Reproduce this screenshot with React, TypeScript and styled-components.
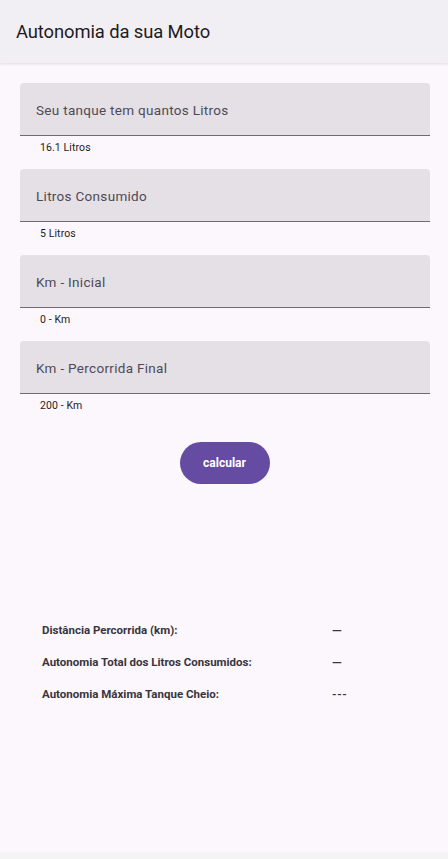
import React from "react";
import styled, { createGlobalStyle } from "styled-components";

const Global = createGlobalStyle`
  html, body { margin: 0; padding: 0; background: #fdf7fc; }
  body { font-family: Roboto, "Noto Sans", sans-serif; -webkit-font-smoothing: antialiased; }
  * { box-sizing: border-box; }
`;

const Screen = styled.div`
  height: 859px;
  display: flex;
  flex-direction: column;
  background: #fcf7fc;
`;

const AppBar = styled.header`
  height: 63px;
  flex: none;
  display: flex;
  align-items: center;
  padding-left: 16px;
  background: #f2eff4;
  box-shadow: 0 1px 3px rgba(0, 0, 0, 0.12);
  position: relative;
  z-index: 1;
`;

const Title = styled.h1`
  margin: 0;
  font-size: 18.4px;
  font-weight: 400;
  color: #1c1b1f;
  letter-spacing: -0.1px;
`;

const Content = styled.main`
  flex: 1;
  display: flex;
  flex-direction: column;
  padding: 20px 18px 0 20px;
`;

const Field = styled.div`
  height: 53px;
  display: flex;
  align-items: center;
  padding: 1px 16px 0;
  background: #e4e0e6;
  border-radius: 4px 4px 0 0;
  border-bottom: 1px solid #6f6a74;
`;

const Label = styled.span`
  font-size: 13.5px;
  color: #4f4a55;
  letter-spacing: 0.3px;
`;

const Helper = styled.div`
  height: 33px;
  padding: 4px 0 0 20px;
  font-size: 10.5px;
  line-height: 16px;
  color: #1f1c22;
  letter-spacing: 0.1px;
`;

const ButtonRow = styled.div`
  display: flex;
  justify-content: center;
  margin-top: 15px;
  padding-right: 2px;
`;

const Button = styled.button`
  width: 90px;
  height: 42px;
  margin-left: 1px;
  border: none;
  border-radius: 21px;
  background: #654ba1;
  color: #ffffff;
  font-family: Roboto, sans-serif;
  font-size: 12px;
  font-weight: 700;
  letter-spacing: 0;
`;

const Results = styled.section`
  margin-top: 130px;
  padding-left: 22px;
  display: flex;
  flex-direction: column;
`;

const ResultRow = styled.div`
  height: 32px;
  display: grid;
  grid-template-columns: 290px 1fr;
  align-items: center;
  font-size: 11.5px;
  font-weight: 700;
  color: #38353c;
`;

const Value = styled.span<{ $wide?: boolean }>`
  font-size: 11.5px;
  letter-spacing: ${(p) => (p.$wide ? "0.6px" : "0")};
  transform: ${(p) => (p.$wide ? "none" : "scaleX(1.1)")};
  transform-origin: left center;
  display: inline-block;
  width: fit-content;
`;

const NavStrip = styled.div`
  height: 7px;
  flex: none;
  background: #f4f4f4;
`;

const fields = [
  { label: "Seu tanque tem quantos Litros", helper: "16.1 Litros" },
  { label: "Litros Consumido", helper: "5 Litros" },
  { label: "Km - Inicial", helper: "0 - Km" },
  { label: "Km - Percorrida Final", helper: "200 - Km" },
];

const results = [
  { label: "Distância Percorrida (km):", value: "—" },
  { label: "Autonomia Total dos Litros Consumidos:", value: "—" },
  { label: "Autonomia Máxima Tanque Cheio:", value: "---", wide: true },
];

export default function App() {
  return (
    <>
      <Global />
      <Screen>
        <AppBar>
          <Title>Autonomia da sua Moto</Title>
        </AppBar>
        <Content>
          {fields.map((f) => (
            <React.Fragment key={f.label}>
              <Field>
                <Label>{f.label}</Label>
              </Field>
              <Helper>{f.helper}</Helper>
            </React.Fragment>
          ))}
          <ButtonRow>
            <Button>calcular</Button>
          </ButtonRow>
          <Results>
            {results.map((r) => (
              <ResultRow key={r.label}>
                <span>{r.label}</span>
                <Value $wide={r.wide}>{r.value}</Value>
              </ResultRow>
            ))}
          </Results>
        </Content>
        <NavStrip />
      </Screen>
    </>
  );
}
